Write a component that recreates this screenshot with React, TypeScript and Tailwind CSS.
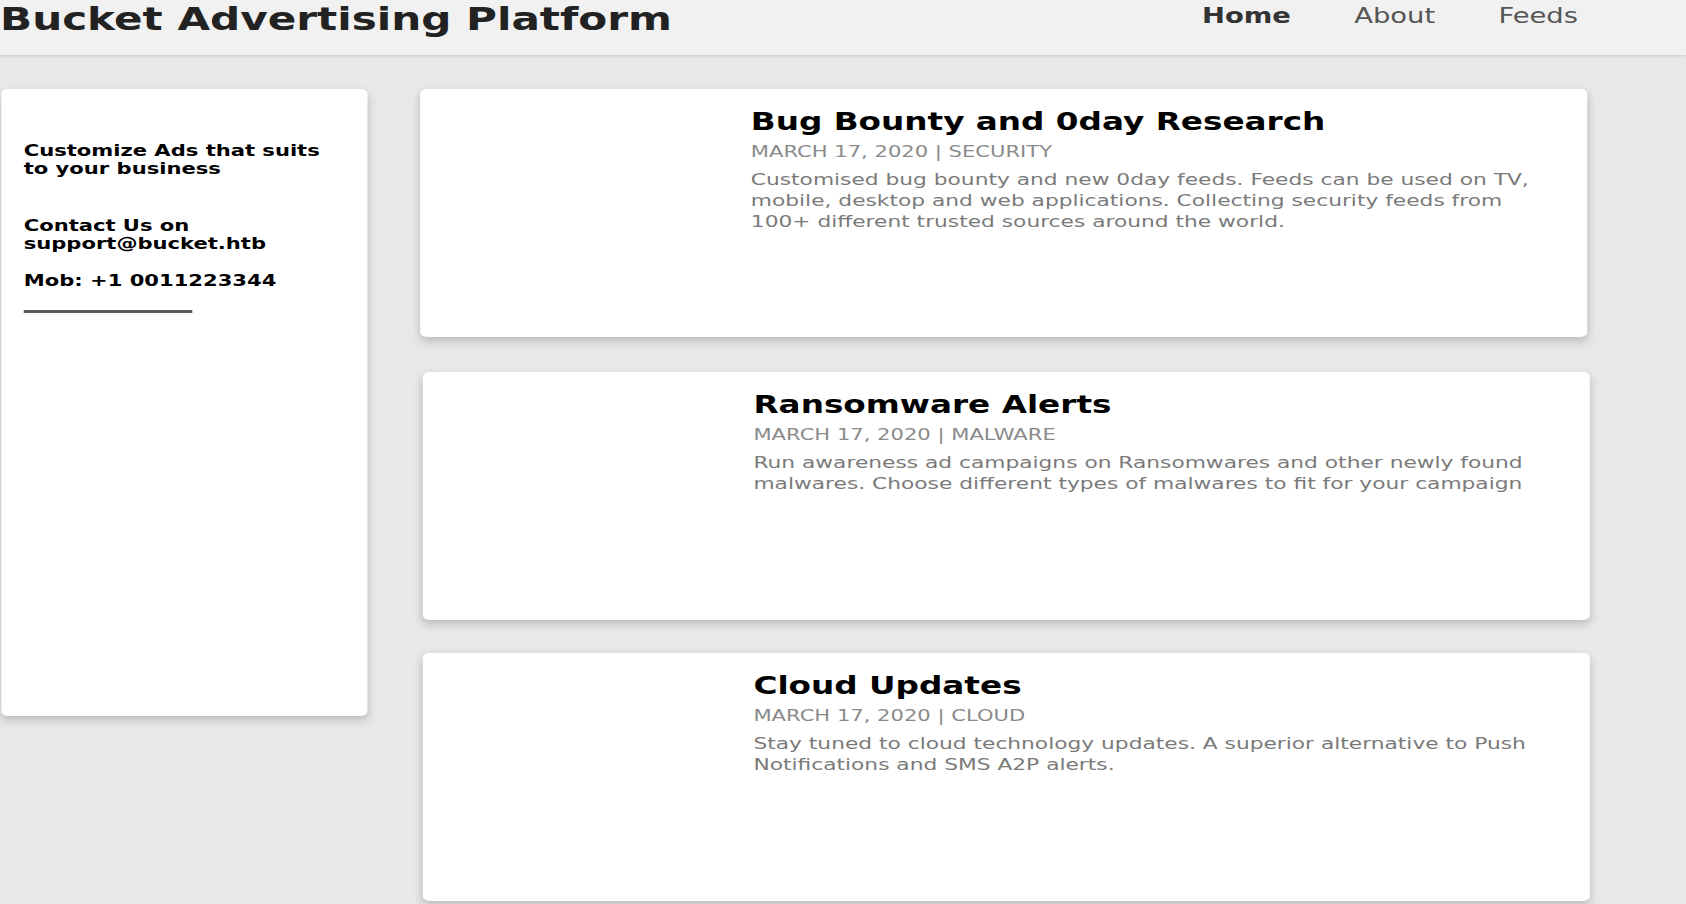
import React from "react";

const posts = [
  {
    title: "Bug Bounty and 0day Research",
    meta: "MARCH 17, 2020 | SECURITY",
    body: "Customised bug bounty and new 0day feeds. Feeds can be used on TV, mobile, desktop and web applications. Collecting security feeds from 100+ different trusted sources around the world.",
  },
  {
    title: "Ransomware Alerts",
    meta: "MARCH 17, 2020 | MALWARE",
    body: "Run awareness ad campaigns on Ransomwares and other newly found malwares. Choose different types of malwares to fit for your campaign",
  },
  {
    title: "Cloud Updates",
    meta: "MARCH 17, 2020 | CLOUD",
    body: "Stay tuned to cloud technology updates. A superior alternative to Push Notifications and SMS A2P alerts.",
  },
];

export default function App() {
  return (
    <div className="h-[904px] w-full overflow-hidden bg-[#e8e8e8] font-['DejaVu_Sans',sans-serif]">
      <div className="w-[1280px] origin-top-left scale-x-[1.3172]">
        <header className="flex h-[55px] items-start justify-between bg-[#f1f1f1] shadow-[0_1px_3px_rgba(0,0,0,0.15)]">
          <h1 className="m-0 text-[32px] font-bold leading-[38px] text-[#222]">Bucket Advertising Platform</h1>
          <nav className="flex pt-1 pr-[58px] text-[20.8px] leading-[24px]">
            <a className="px-6 font-bold text-[#333]">Home</a>
            <a className="px-6 text-[#555]">About</a>
            <a className="px-6 text-[#555]">Feeds</a>
          </nav>
        </header>

        <main className="flex items-start pt-[34px]">
          <aside className="ml-px h-[627px] w-[278px] rounded-[5px] bg-white pt-[53px] pl-[17px] pr-[26px] text-[16px] font-bold leading-[18px] text-black shadow-[0_4px_8px_0_rgba(0,0,0,0.2)]">
            <p>Customize Ads that suits to your business</p>
            <p className="mt-[39px]">Contact Us on support@bucket.htb</p>
            <p className="mt-[19px]">Mob: +1 0011223344</p>
            <div className="mt-[20px] h-[3px] w-[128px] bg-[#5a5a5a]" />
          </aside>

          <section className="ml-[42px] mt-[2px] flex flex-col gap-[33px]">
            {posts.map((p, i) => (
              <article
                key={p.title}
                className={
                  i === 0
                    ? "h-[248px] w-[886px] -translate-x-[2px] -translate-y-[2px] rounded-[5px] bg-white pl-[251px] pr-[30px] pt-[19px] shadow-[0_4px_8px_0_rgba(0,0,0,0.2)]"
                    : "h-[248px] w-[886px] rounded-[5px] bg-white pl-[251px] pr-[30px] pt-[19px] shadow-[0_4px_8px_0_rgba(0,0,0,0.2)]"
                }
              >
                <h2 className="text-[24.8px] font-bold leading-[28px] text-black">{p.title}</h2>
                <div className="mt-[6px] text-[16px] leading-[19px] text-[#8a8a8a]">{p.meta}</div>
                <p className="mt-[8px] text-[16.5px] leading-[21px] text-[#7a7a7a]">{p.body}</p>
              </article>
            ))}
          </section>
        </main>
      </div>
    </div>
  );
}
